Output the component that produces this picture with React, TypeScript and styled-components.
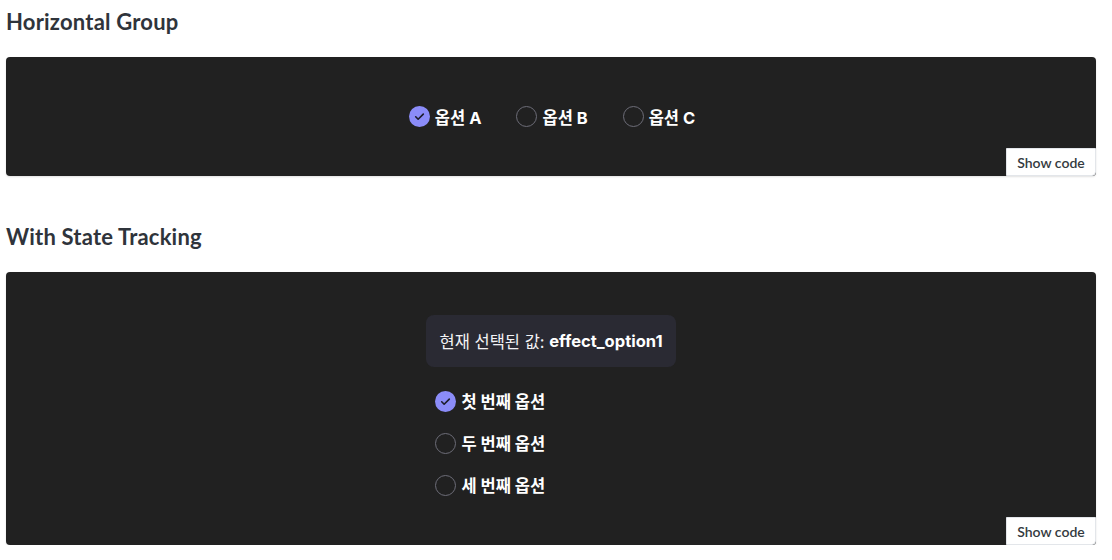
import React, { useState } from 'react'
import styled, { createGlobalStyle } from 'styled-components'

const GlobalStyle = createGlobalStyle`
    body {
        margin: 0;
        background: #ffffff;
        font-family: Lato, 'Noto Sans CJK KR', sans-serif;
    }
`

interface Option {
    value: string
    label: string
}

const horizontalOptions: Option[] = [
    { value: 'a', label: '옵션 A' },
    { value: 'b', label: '옵션 B' },
    { value: 'c', label: '옵션 C' },
]

const trackingOptions: Option[] = [
    { value: 'effect_option1', label: '첫 번째 옵션' },
    { value: 'effect_option2', label: '두 번째 옵션' },
    { value: 'effect_option3', label: '세 번째 옵션' },
]

const RadioItem = ({ option, checked, onSelect }: { option: Option; checked: boolean; onSelect: (v: string) => void }) => (
    <ItemLabel onClick={() => onSelect(option.value)}>
        <Circle $checked={checked}>
            {checked && (
                <svg width="13" height="13" viewBox="0 0 24 24" fill="none" stroke="#1c1c2a" strokeWidth="3" strokeLinecap="round" strokeLinejoin="round">
                    <path d="M5 12.5l4.5 4.5L19 7.5" />
                </svg>
            )}
        </Circle>
        <ItemText>{option.label}</ItemText>
    </ItemLabel>
)

const App = () => {
    const [horizontal, setHorizontal] = useState('a')
    const [tracked, setTracked] = useState('effect_option1')

    return (
        <Page>
            <GlobalStyle />
            <Section>
                <Title>Horizontal Group</Title>
                <Preview $height={119}>
                    <Row>
                        {horizontalOptions.map((o) => (
                            <RadioItem key={o.value} option={o} checked={horizontal === o.value} onSelect={setHorizontal} />
                        ))}
                    </Row>
                    <ShowCode>Show code</ShowCode>
                </Preview>
            </Section>
            <Section>
                <Title>With State Tracking</Title>
                <Preview $height={273}>
                    <TrackingBlock>
                        <StateBox>
                            현재 선택된 값: <strong>{tracked}</strong>
                        </StateBox>
                        <Column>
                            {trackingOptions.map((o) => (
                                <RadioItem key={o.value} option={o} checked={tracked === o.value} onSelect={setTracked} />
                            ))}
                        </Column>
                    </TrackingBlock>
                    <ShowCode>Show code</ShowCode>
                </Preview>
            </Section>
        </Page>
    )
}

export default App

const Page = styled.div`
    padding: 0 16px 0 6px;
    display: flex;
    flex-direction: column;
    gap: 39px;
`

const Section = styled.section`
    display: flex;
    flex-direction: column;
`

const Title = styled.h2`
    margin: 0;
    padding-top: 8px;
    height: 57px;
    box-sizing: border-box;
    font-size: 22px;
    font-weight: 700;
    color: #2f343b;
    letter-spacing: 0.2px;
`

const Preview = styled.div<{ $height: number }>`
    position: relative;
    height: ${(p) => p.$height}px;
    background: #212121;
    border-radius: 4px;
    display: flex;
    align-items: center;
    justify-content: center;
    box-shadow: 0 1px 2px rgba(0, 0, 0, 0.12);
`

const Row = styled.div`
    display: flex;
    align-items: center;
    gap: 35px;
    margin-left: 2px;
`

const Column = styled.div`
    display: flex;
    flex-direction: column;
    gap: 18px;
    padding-left: 9px;
`

const TrackingBlock = styled.div`
    display: flex;
    flex-direction: column;
    gap: 22px;
    margin-bottom: 5px;
`

const StateBox = styled.div`
    background: #2a2a33;
    border-radius: 8px;
    padding: 0 13px;
    height: 52px;
    display: flex;
    align-items: center;
    white-space: pre;
    font-family: Inter, 'Noto Sans CJK KR', sans-serif;
    font-size: 16.5px;
    color: #f2f2f5;

    strong {
        font-weight: 700;
        color: #ffffff;
    }
`

const ItemLabel = styled.label`
    display: flex;
    align-items: center;
    gap: 5px;
    cursor: pointer;
`

const Circle = styled.span<{ $checked: boolean }>`
    width: 21px;
    height: 21px;
    box-sizing: border-box;
    border-radius: 50%;
    display: flex;
    align-items: center;
    justify-content: center;
    background: ${(p) => (p.$checked ? '#8b8cf8' : 'transparent')};
    border: ${(p) => (p.$checked ? 'none' : '1.5px solid #6d6d78')};
`

const ItemText = styled.span`
    font-family: Inter, 'Noto Sans CJK KR', sans-serif;
    font-size: 16.5px;
    font-weight: 700;
    color: #ffffff;
`

const ShowCode = styled.button`
    position: absolute;
    right: 0;
    bottom: 0;
    width: 90px;
    height: 28px;
    background: #ffffff;
    border: 1px solid #e3e6ea;
    border-radius: 0 0 4px 0;
    font-family: Lato, sans-serif;
    font-size: 14px;
    font-weight: 600;
    color: #343a40;
    cursor: pointer;
`
